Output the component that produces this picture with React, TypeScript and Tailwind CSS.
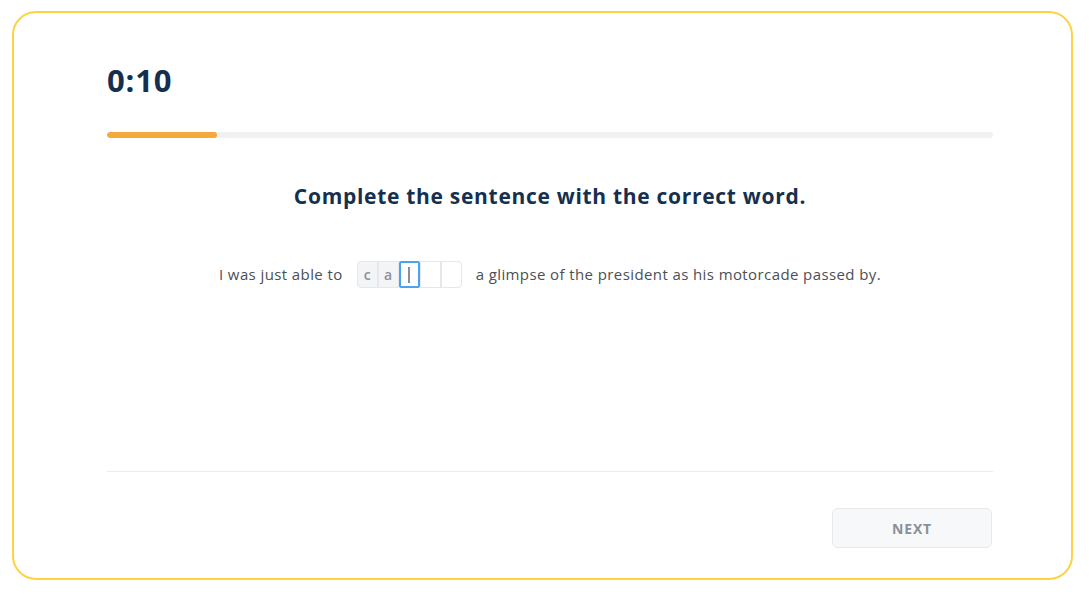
import { useState } from 'react';

/* ── Letter boxes for the missing word ───────────────────────────────── */
function LetterBoxes({ letters, total }: { letters: string[]; total: number }) {
  const active = letters.length;
  return (
    <div className="flex items-center">
      {Array.from({ length: total }).map((_, i) => {
        const filled = i < letters.length;
        const isActive = i === active;
        return (
          <div
            key={i}
            className={`w-[21px] h-[27px] flex items-center justify-center text-[14px] font-semibold tracking-normal
              ${isActive
                ? 'border-2 border-[#4aa3ef] rounded-[2px] bg-white'
                : filled
                  ? 'border border-[#e5e7eb] bg-[#f3f4f6] text-[#8a8f96]'
                  : 'border border-[#e5e7eb] bg-white'}
              ${i === 0 ? 'rounded-l-[4px]' : ''} ${i === total - 1 ? 'rounded-r-[4px]' : ''}`}
          >
            {filled ? letters[i] : isActive ? <span className="w-[2px] h-[16px] bg-[#8a8f96]" /> : null}
          </div>
        );
      })}
    </div>
  );
}

export default function App() {
  const [letters] = useState(['c', 'a']);

  return (
    <div className="w-[1089px] h-[606px] bg-white pt-[11px] pl-[12px]" style={{ fontFamily: '"Open Sans", Lato, sans-serif' }}>
      <div className="w-[1061px] h-[569px] border-2 border-[#fdd341] rounded-[24px] pl-[93px] pr-[78px] pt-[47px] flex flex-col">
        {/* Timer */}
        <div className="text-[31px] leading-[40px] font-bold tracking-[0.8px] text-[#15304f]">0:10</div>

        {/* Progress */}
        <div className="mt-[32px] h-[6px] w-full rounded-full bg-[#f1f1f2] overflow-hidden">
          <div className="h-full w-[110px] rounded-full bg-[#f5a93a]" />
        </div>

        {/* Prompt */}
        <h1 className="mt-[44px] text-center text-[21px] leading-[28px] font-bold tracking-[0.7px] text-[#15304f]">
          Complete the sentence with the correct word.
        </h1>

        {/* Sentence */}
        <div className="mt-[51px] flex items-center justify-center gap-[14px] text-[15px] leading-[27px] tracking-[0.4px] text-[#4b4f56]">
          <span>I was just able to</span>
          <LetterBoxes letters={letters} total={5} />
          <span>a glimpse of the president as his motorcade passed by.</span>
        </div>

        {/* Footer */}
        <div className="mt-[183px] border-t border-[#ececee]" />
        <div className="mt-[36px] flex justify-end pr-[1px]">
          <button className="w-[160px] h-[40px] rounded-[6px] bg-[#f7f8fa] border border-[#e6e8eb] text-[14px] font-bold tracking-[0.8px] text-[#8a9099]">
            NEXT
          </button>
        </div>
      </div>
    </div>
  );
}
